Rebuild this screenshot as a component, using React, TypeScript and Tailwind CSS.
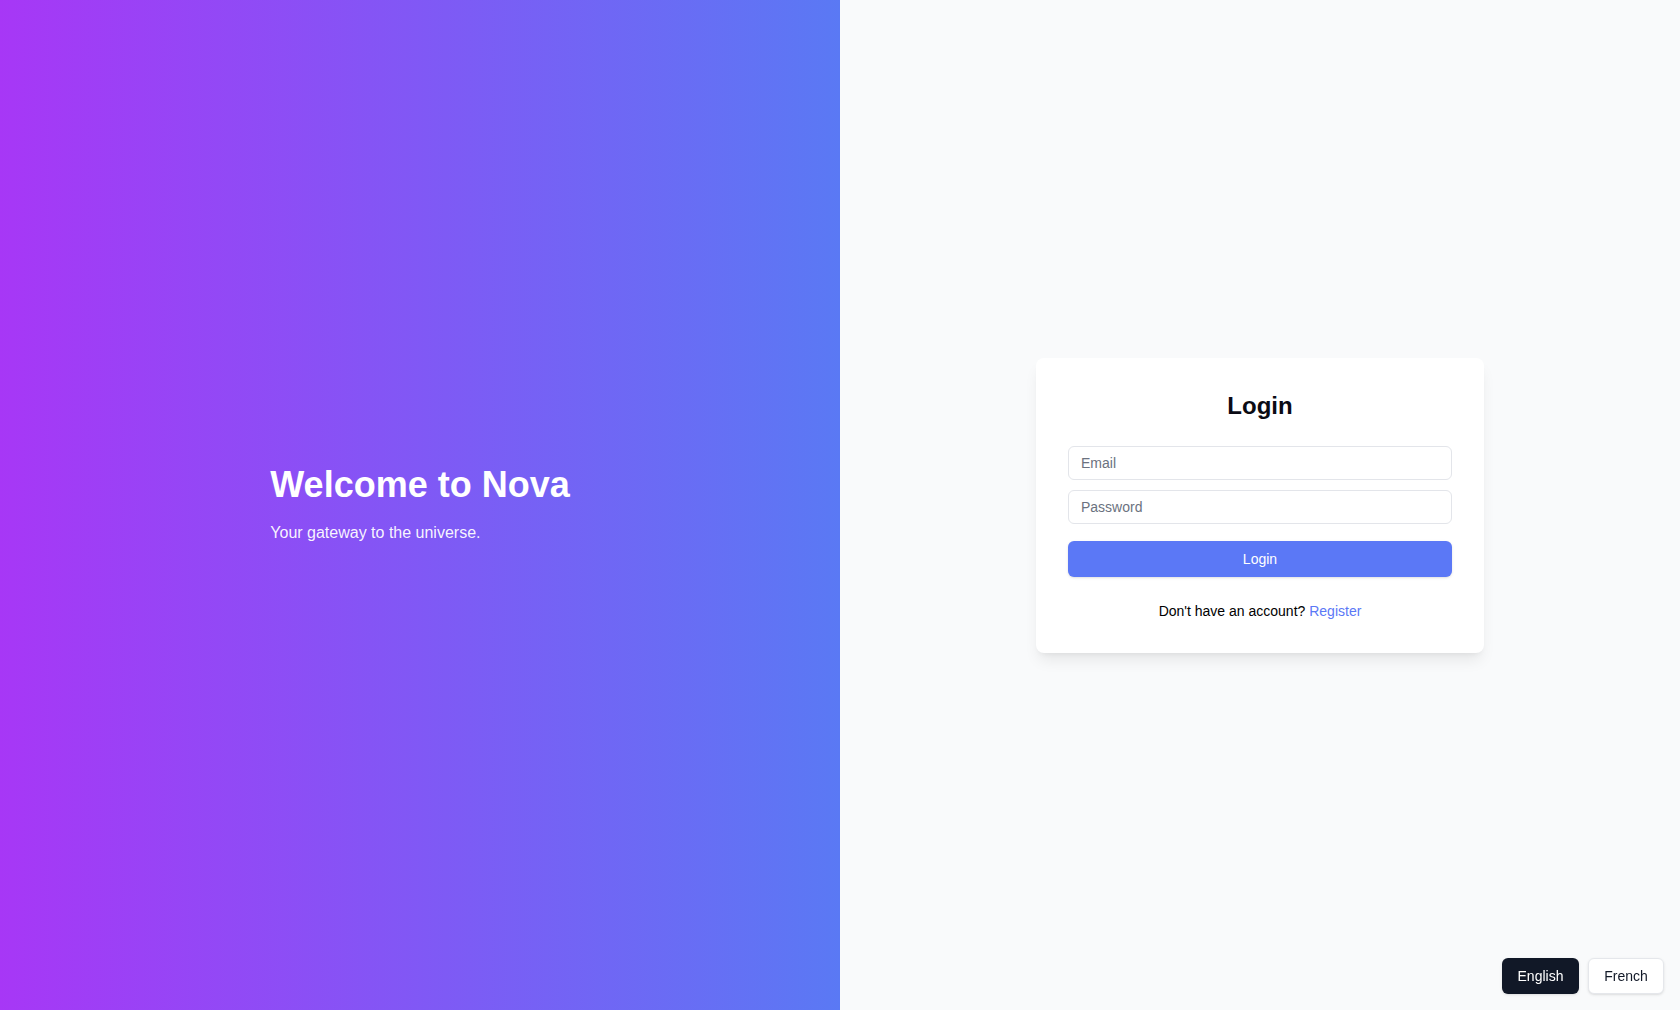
import { useState } from 'react'

function LanguageSwitch() {
  const [lang, setLang] = useState('en')

  return (
    <div className="fixed bottom-4 right-4 flex gap-[9px]">
      <button
        onClick={() => setLang('en')}
        className={
          lang === 'en'
            ? 'h-9 w-[77px] rounded-md bg-[#111827] text-sm text-white shadow-sm'
            : 'h-9 w-[77px] rounded-md border border-[#e5e7eb] bg-white text-sm text-[#111827] shadow-sm'
        }
      >
        English
      </button>
      <button
        onClick={() => setLang('fr')}
        className={
          lang === 'fr'
            ? 'h-9 w-[76px] rounded-md bg-[#111827] text-sm text-white shadow-sm'
            : 'h-9 w-[76px] rounded-md border border-[#e5e7eb] bg-white text-sm text-[#111827] shadow-sm'
        }
      >
        French
      </button>
    </div>
  )
}

function LoginCard() {
  return (
    <div className="w-[448px] rounded-lg bg-white p-8 shadow-[0_10px_15px_-3px_rgba(0,0,0,0.08),0_4px_6px_-4px_rgba(0,0,0,0.08)]">
      <h2 className="mb-6 text-center text-2xl font-bold text-[#0b0b14]">Login</h2>
      <form onSubmit={(e) => e.preventDefault()}>
        <input
          type="email"
          placeholder="Email"
          className="mb-2.5 block h-[34px] w-full rounded-md border border-[#e3e5ea] px-3 text-sm text-gray-900 placeholder:text-[#6b7280] outline-none"
        />
        <input
          type="password"
          placeholder="Password"
          className="block h-[34px] w-full rounded-md border border-[#e3e5ea] px-3 text-sm text-gray-900 placeholder:text-[#6b7280] outline-none"
        />
        <button
          type="submit"
          className="mt-[17px] h-9 w-full rounded-md bg-[#5b78f6] text-sm text-white shadow-sm"
        >
          Login
        </button>
      </form>
      <p className="mt-6 text-center text-sm text-black">
        Don't have an account? <a href="#" className="text-[#5b78f6]">Register</a>
      </p>
    </div>
  )
}

export default function App() {
  return (
    <div className="flex h-[1010px] w-full font-['Liberation_Sans',Arial,sans-serif]">
      <div className="flex w-1/2 items-center justify-center bg-linear-to-r/srgb from-[#a737f6] to-[#5a79f4] text-white">
        <div>
          <h1 className="mb-4 text-4xl font-bold">Welcome to Nova</h1>
          <p className="text-base text-white/95">Your gateway to the universe.</p>
        </div>
      </div>
      <div className="flex w-1/2 items-center justify-center bg-[#f9fafb]">
        <LoginCard />
      </div>
      <LanguageSwitch />
    </div>
  )
}
